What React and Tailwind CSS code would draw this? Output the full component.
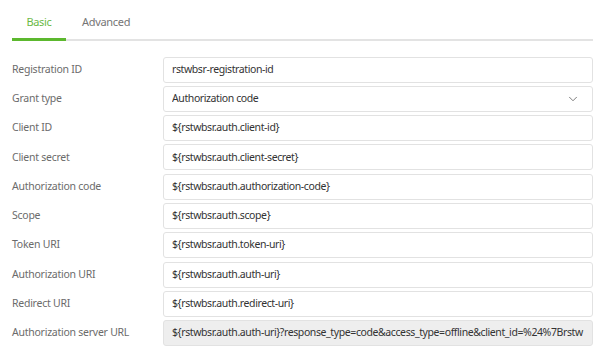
import { ChevronDown } from "lucide-react";

const rows = [
  { label: "Registration ID", value: "rstwbsr-registration-id" },
  { label: "Grant type", value: "Authorization code", select: true },
  { label: "Client ID", value: "${rstwbsr.auth.client-id}" },
  { label: "Client secret", value: "${rstwbsr.auth.client-secret}" },
  { label: "Authorization code", value: "${rstwbsr.auth.authorization-code}" },
  { label: "Scope", value: "${rstwbsr.auth.scope}" },
  { label: "Token URI", value: "${rstwbsr.auth.token-uri}" },
  { label: "Authorization URI", value: "${rstwbsr.auth.auth-uri}" },
  { label: "Redirect URI", value: "${rstwbsr.auth.redirect-uri}" },
  {
    label: "Authorization server URL",
    value:
      "${rstwbsr.auth.auth-uri}?response_type=code&access_type=offline&client_id=%24%7Brstw",
    readOnly: true,
  },
];

export default function App() {
  return (
    <div className="w-[605px] h-[351px] bg-white font-['Noto_Sans',sans-serif] overflow-hidden">
      <div className="pl-3 pr-3 pt-[13px]">
        <div className="flex border-b-2 border-[#e3e3e3] w-[581px]">
          <div className="w-[54px] text-center text-[11px] tracking-[-0.3px] text-[#6ab945] pt-[1px] pb-[7px] border-b-[3px] border-[#5cb82e] -mb-[2px]">
            Basic
          </div>
          <div className="pl-4 text-[11px] tracking-[-0.3px] text-[#757575] pt-[1px] pb-[7px]">Advanced</div>
        </div>

        <div className="mt-4 flex flex-col gap-[3.3px]">
          {rows.map((r) => (
            <div key={r.label} className="flex items-center h-[26px]">
              <div className="w-[151px] text-[10.5px] tracking-[-0.25px] text-[#6b6b6b]">{r.label}</div>
              <div
                className={`w-[430px] h-[26px] rounded-[3px] border border-[#e2e2e2] flex items-center pl-2 pr-2 text-[10.5px] tracking-[-0.4px] text-[#333] overflow-hidden whitespace-nowrap ${
                  r.readOnly ? "bg-[#eeeeee]" : "bg-white"
                }`}
              >
                <span className="flex-1 overflow-hidden">{r.value}</span>
                {r.select && <ChevronDown size={14} strokeWidth={1.3} className="text-[#555] mr-1" />}
              </div>
            </div>
          ))}
        </div>
      </div>
    </div>
  );
}
